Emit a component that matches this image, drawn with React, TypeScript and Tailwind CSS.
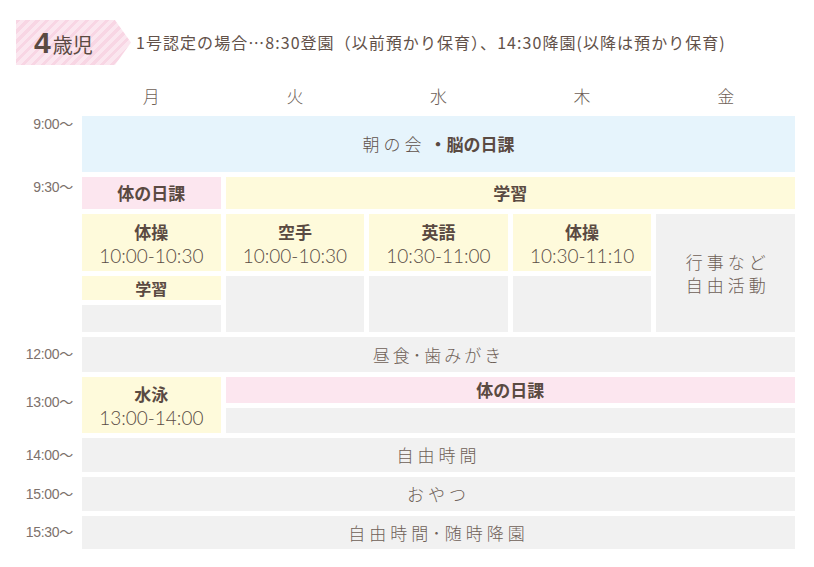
import React from "react";

const JP = "font-['Noto_Sans_CJK_JP',sans-serif]";
const NUM = "font-['Lato','Noto_Sans_CJK_JP',sans-serif]";
const LAB = "font-['Liberation_Sans','Noto_Sans_CJK_JP',sans-serif]";

function TimeLabel({ children, row, align = "center", pt = "" }: { children: React.ReactNode; row: string; align?: string; pt?: string }) {
  return (
    <div className={`col-start-1 ${row} flex ${align === "start" ? "items-start" : "items-center"} justify-end pr-[4px] ${pt} text-[14px] leading-[17px] text-[#7d716b] ${LAB} tracking-[-0.3px]`}>
      {children}
    </div>
  );
}

function Lesson({ title, time }: { title: string; time: string }) {
  return (
    <div className="flex flex-col items-center justify-center h-full">
      <div className={`text-[17px] leading-[25px] font-bold text-[#5a4a42] ${JP}`}>{title}</div>
      <div className={`text-[19px] leading-[23px] font-light text-[#5a4c45] ${NUM}`}>{time}</div>
    </div>
  );
}

export default function App() {
  return (
    <div className={`w-[814px] h-[567px] bg-white overflow-hidden ${JP}`}>
      {/* Header */}
      <div className="flex items-center pt-[20px] pl-[16px]">
        <div className="relative w-[115px] h-[45px] bg-[repeating-linear-gradient(135deg,#f8d6e4_0px,#f8d6e4_3px,#fbe6ef_3px,#fbe6ef_7px)] [clip-path:polygon(0_0,86%_0,100%_50%,86%_100%,0_100%)] flex items-center pl-[18px]">
          <span className={`text-[30px] leading-none font-bold text-[#5a4a42] ${LAB}`}>4</span>
          <span className="text-[20px] leading-none text-[#5a4a42] ml-[2px] mt-[4px]">歳児</span>
        </div>
        <div className="ml-[5px] text-[16px] leading-[20px] text-[#625149] tracking-[1.05px] -mt-[2px]">
          1号認定の場合…8:30登園（以前預かり保育）、14:30降園(以降は預かり保育)
        </div>
      </div>

      {/* Grid */}
      <div className="mt-[19px] grid grid-cols-[77px_repeat(5,138.6px)] gap-[5px] grid-rows-[27px_56px_32px_57px_24px_27px_35px_26px_25px_34px_34px_33px]">
        {/* Day row */}
        {["月", "火", "水", "木", "金"].map((d, i) => (
          <div key={d} className={`row-start-1 ${["col-start-2", "col-start-3", "col-start-4", "col-start-5", "col-start-6"][i]} flex items-center justify-center pb-[4px] text-[17px] text-[#6e5f57] font-light`}>
            {d}
          </div>
        ))}

        {/* Time labels */}
        <TimeLabel row="row-start-2" align="start">9:00～</TimeLabel>
        <TimeLabel row="row-start-3" align="start" pt="pt-[2px]">9:30～</TimeLabel>
        <TimeLabel row="row-start-7">12:00～</TimeLabel>
        <TimeLabel row="row-start-8 row-span-2" pt="pb-[6px]">13:00～</TimeLabel>
        <TimeLabel row="row-start-10">14:00～</TimeLabel>
        <TimeLabel row="row-start-11">15:00～</TimeLabel>
        <TimeLabel row="row-start-12">15:30～</TimeLabel>

        {/* 朝の会 */}
        <div className="row-start-2 col-start-2 col-span-5 bg-[#e6f4fc] flex items-center justify-center text-[17px] text-[#5f514a]">
          <span className="font-light tracking-[4px]">朝の会</span>
          <span className="font-bold text-[#5a4a42] ml-[4px]">・脳の日課</span>
        </div>

        {/* 9:30 row */}
        <div className="row-start-3 col-start-2 bg-[#fce6ef] flex items-center justify-center text-[17px] font-bold text-[#5a4a42]">体の日課</div>
        <div className="row-start-3 col-start-3 col-span-4 bg-[#fefadb] flex items-center justify-center text-[17px] font-bold text-[#5a4a42]">学習</div>

        {/* Lessons */}
        <div className="row-start-4 col-start-2 bg-[#fefadb]"><Lesson title="体操" time="10:00-10:30" /></div>
        <div className="row-start-4 col-start-3 bg-[#fefadb]"><Lesson title="空手" time="10:00-10:30" /></div>
        <div className="row-start-4 col-start-4 bg-[#fefadb]"><Lesson title="英語" time="10:30-11:00" /></div>
        <div className="row-start-4 col-start-5 bg-[#fefadb]"><Lesson title="体操" time="10:30-11:10" /></div>
        <div className="row-start-4 row-span-3 col-start-6 bg-[#f1f1f1] flex flex-col items-center justify-center text-[17px] leading-[23px] font-light tracking-[4px] text-[#6e5f57] pl-[4px]">
          <div>行事など</div>
          <div>自由活動</div>
        </div>

        <div className="row-start-5 col-start-2 bg-[#fefadb] flex items-center justify-center text-[16px] font-bold text-[#5a4a42]">学習</div>
        <div className="row-start-6 col-start-2 bg-[#f1f1f1]" />
        <div className="row-start-5 row-span-2 col-start-3 bg-[#f1f1f1]" />
        <div className="row-start-5 row-span-2 col-start-4 bg-[#f1f1f1]" />
        <div className="row-start-5 row-span-2 col-start-5 bg-[#f1f1f1]" />

        {/* 12:00 */}
        <div className="row-start-7 col-start-2 col-span-5 bg-[#f1f1f1] flex items-center justify-center text-[17px] font-light tracking-[3px] text-[#6e5f57]">昼食･歯みがき</div>

        {/* 13:00 */}
        <div className="row-start-8 row-span-2 col-start-2 bg-[#fefadb]"><Lesson title="水泳" time="13:00-14:00" /></div>
        <div className="row-start-8 col-start-3 col-span-4 bg-[#fce6ef] flex items-center justify-center text-[17px] font-bold text-[#5a4a42]">体の日課</div>
        <div className="row-start-9 col-start-3 col-span-4 bg-[#f1f1f1]" />

        {/* Afternoon */}
        <div className="row-start-10 col-start-2 col-span-5 bg-[#f1f1f1] flex items-center justify-center text-[17px] font-light tracking-[4px] text-[#6e5f57]">自由時間</div>
        <div className="row-start-11 col-start-2 col-span-5 bg-[#f1f1f1] flex items-center justify-center text-[17px] font-light tracking-[4px] text-[#6e5f57]">おやつ</div>
        <div className="row-start-12 col-start-2 col-span-5 bg-[#f1f1f1] flex items-center justify-center text-[17px] font-light tracking-[4px] text-[#6e5f57]">自由時間･随時降園</div>
      </div>
    </div>
  );
}
